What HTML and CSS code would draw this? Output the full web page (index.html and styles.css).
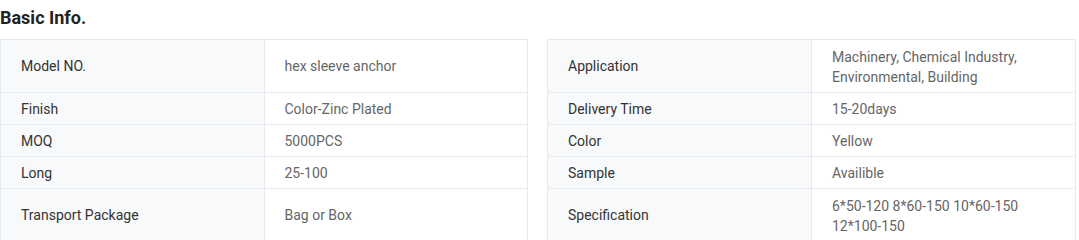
FILE: index.html
```html
<!DOCTYPE html>
<html>
<head>
<meta charset="utf-8">
<link rel="stylesheet" href="styles.css">
</head>
<body>
<h2 class="title">Basic Info.</h2>
<div class="tables">
  <table class="info left">
    <tr class="multi"><td class="label">Model NO.</td><td class="value">hex sleeve anchor</td></tr>
    <tr><td class="label">Finish</td><td class="value">Color-Zinc Plated</td></tr>
    <tr><td class="label">MOQ</td><td class="value">5000PCS</td></tr>
    <tr><td class="label">Long</td><td class="value">25-100</td></tr>
    <tr class="multi"><td class="label">Transport Package</td><td class="value">Bag or Box</td></tr>
  </table>
  <table class="info right">
    <tr class="multi"><td class="label">Application</td><td class="value two">Machinery, Chemical Industry,<br>Environmental, Building</td></tr>
    <tr><td class="label">Delivery Time</td><td class="value">15-20days</td></tr>
    <tr><td class="label">Color</td><td class="value">Yellow</td></tr>
    <tr><td class="label">Sample</td><td class="value">Availible</td></tr>
    <tr class="multi"><td class="label">Specification</td><td class="value two">6*50-120 8*60-150 10*60-150<br>12*100-150</td></tr>
  </table>
</div>
</body>
</html>
```
FILE: styles.css
```css
html, body {
  margin: 0;
  padding: 0;
  background: #ffffff;
  font-family: Roboto, "Liberation Sans", sans-serif;
}
.title {
  margin: 0 0 3px 0;
  font-size: 18px;
  font-weight: 700;
  line-height: 36px;
  color: #222222;
}
.tables {
  display: flex;
  gap: 19px;
  align-items: flex-start;
}
.info {
  border-collapse: collapse;
  table-layout: fixed;
  font-size: 14px;
  line-height: 20px;
}
.info.left { width: 528px; }
.info.right { width: 529px; }
.info td {
  border: 1px solid #e6e9ef;
  padding: 6px 20px 5px;
  vertical-align: middle;
  width: 50%;
}
.info tr.multi td {
  padding: 6px 20px;
  height: 40px;
}
.info tr.multi td.two {
  padding: 7px 20px 5px;
}
.label {
  background: #f8f9fb;
  color: #333333;
}
.value {
  background: #ffffff;
  color: #666666;
}
```
